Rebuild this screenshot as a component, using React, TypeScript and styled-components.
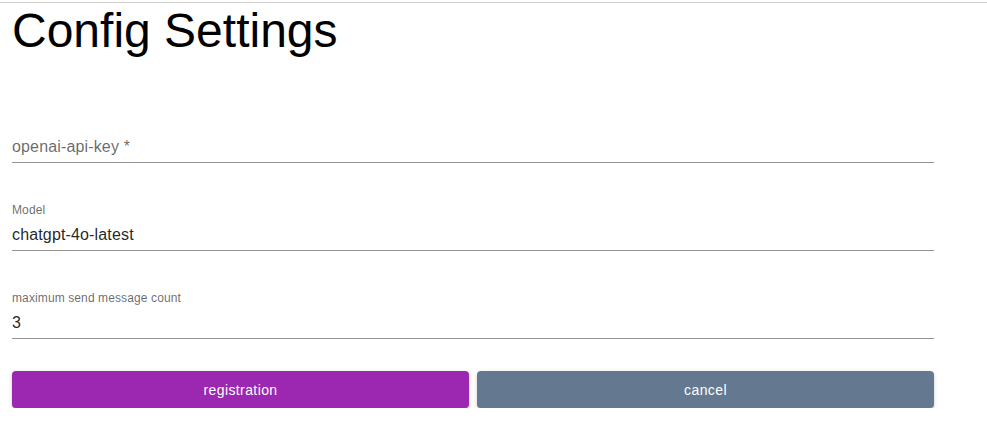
import React from 'react';
import styled, { createGlobalStyle } from 'styled-components';

const GlobalStyle = createGlobalStyle`
  body {
    margin: 0;
    background: #fff;
    font-family: "Liberation Sans", Arial, sans-serif;
  }
`;

const Page = styled.div`
  margin-top: 2px;
  border-top: 1px solid #d3d3d3;
  padding: 0 12px;
`;

const Title = styled.h1`
  margin: 0;
  font-size: 48px;
  font-weight: 400;
  line-height: 55px;
  color: #000;
`;

const Form = styled.form`
  width: 922px;
  margin-top: 57px;
`;

const Fields = styled.div`
  display: flex;
  flex-direction: column;
  gap: 40px;
`;

const Field = styled.div`
  position: relative;
  height: 48px;
`;

const Label = styled.label<{ $shrink?: boolean }>`
  position: absolute;
  left: 0;
  top: ${(p) => (p.$shrink ? '-1px' : '20px')};
  font-size: ${(p) => (p.$shrink ? '12px' : '16px')};
  line-height: ${(p) => (p.$shrink ? '17px' : '23px')};
  letter-spacing: ${(p) => (p.$shrink ? '0.11px' : '0.15px')};
  color: rgba(0, 0, 0, 0.6);
  pointer-events: none;
`;

const InputBox = styled.div`
  margin-top: 16px;
  border-bottom: 1px solid rgba(0, 0, 0, 0.42);
`;

const Input = styled.input`
  display: block;
  box-sizing: content-box;
  width: 100%;
  height: 23px;
  padding: 4px 0;
  border: none;
  outline: none;
  background: transparent;
  font-family: inherit;
  font-size: 16px;
  letter-spacing: 0.15px;
  color: rgba(0, 0, 0, 0.87);
`;

const Actions = styled.div`
  display: grid;
  grid-template-columns: 1fr 1fr;
  gap: 8px;
  margin-top: 32px;
`;

const Button = styled.button<{ $tone: 'primary' | 'muted' }>`
  height: 37px;
  border: none;
  border-radius: 4px;
  background: ${(p) => (p.$tone === 'primary' ? '#9c27b0' : '#647990')};
  color: #fff;
  font-family: inherit;
  font-size: 14px;
  letter-spacing: 0.4px;
  cursor: pointer;
  box-shadow: 0px 3px 1px -2px rgba(0, 0, 0, 0.2), 0px 2px 2px 0px rgba(0, 0, 0, 0.14),
    0px 1px 5px 0px rgba(0, 0, 0, 0.12);
`;

const fields = [
  { id: 'apiKey', label: 'openai-api-key *', value: '' },
  { id: 'model', label: 'Model', value: 'chatgpt-4o-latest' },
  { id: 'count', label: 'maximum send message count', value: '3' },
];

const App = () => {
  return (
    <>
      <GlobalStyle />
      <Page>
        <Title>Config Settings</Title>
        <Form onSubmit={(e) => e.preventDefault()}>
          <Fields>
            {fields.map((f) => (
              <Field key={f.id}>
                <Label htmlFor={f.id} $shrink={f.value !== ''}>
                  {f.label}
                </Label>
                <InputBox>
                  <Input id={f.id} defaultValue={f.value} />
                </InputBox>
              </Field>
            ))}
          </Fields>
          <Actions>
            <Button type="submit" $tone="primary">registration</Button>
            <Button type="button" $tone="muted">cancel</Button>
          </Actions>
        </Form>
      </Page>
    </>
  );
};

export default App;
